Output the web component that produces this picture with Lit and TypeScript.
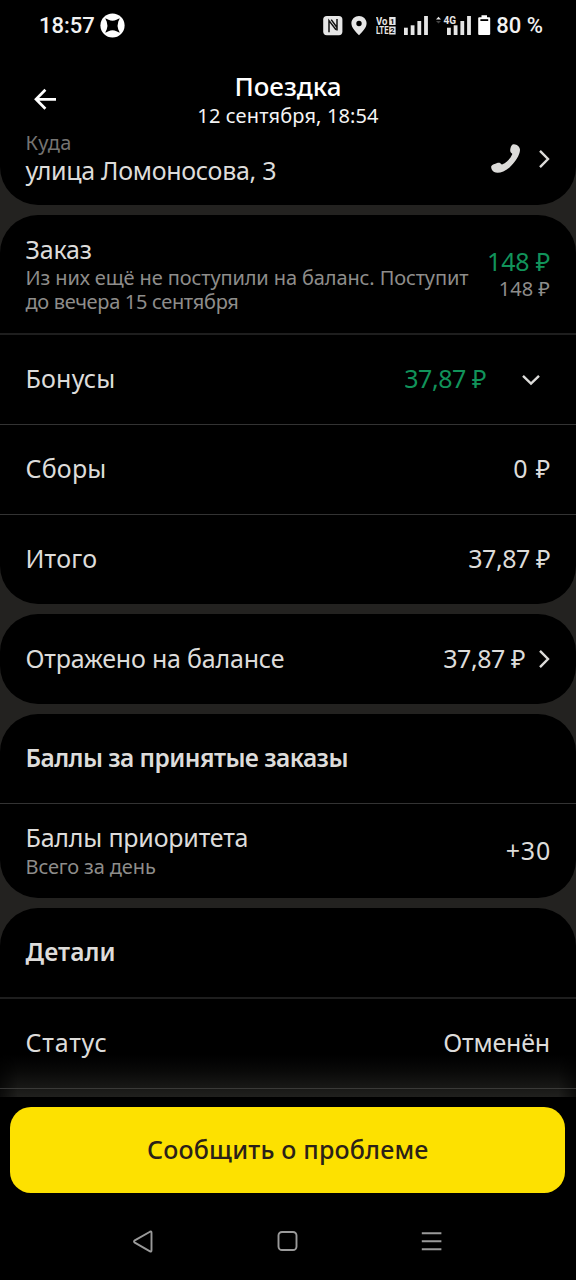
import { LitElement, html, css, svg, nothing } from 'lit';
import { customElement, property } from 'lit/decorators.js';
import { classMap } from 'lit/directives/class-map.js';

const bar = (x: number, top: number) => svg`<rect x=${x} y=${top} width="3.8" height=${20 - top} />`;
const bars = (x: number) => [bar(x, 12.7), bar(x + 6.7, 10.3), bar(x + 13.4, 6), bar(x + 20.1, 1)];

const chevronRight = html`<svg width="12" height="20" viewBox="0 0 12 20" fill="none" stroke="#dcdbd9" stroke-width="2.4"><path d="M2 1.8 10 10l-8 8.2" /></svg>`;
const chevronDown = html`<svg width="20" height="12" viewBox="0 0 20 12" fill="none" stroke="#dcdbd9" stroke-width="2.4"><path d="M2 1.8 10 9.6l8-7.8" /></svg>`;

@customElement('status-bar')
export class StatusBar extends LitElement {
  static styles = css`
    :host { display: flex; height: 35px; padding: 15px 33px 0 39px; align-items: flex-start; color: #f2f2f2;
      font: 500 22px/21px Roboto, sans-serif; }
    svg { display: block; flex: none; fill: #e6e6e6; }
    .badge { margin: -2px 0 0 5.5px; }
    .gap { flex: 1; }
    .pin { margin-left: 8px; }
    .volte { margin-left: 9px; }
    .signal { margin-left: 8px; }
    .net { margin-left: 7px; }
    .battery { margin-left: 7px; }
    .pct { margin-left: 5px; white-space: nowrap; }
    .num { font: 700 8px Roboto, sans-serif; fill: #000; }
    .lte { font: 700 10.5px Roboto, sans-serif; }
  `;
  render() {
    return html`
      <span>18:57</span>
      <svg class="badge" width="25" height="25" viewBox="-12.5 -12.5 25 25">
        <circle r="12.1" fill="#fff" />
        <path fill="#000" d="M-7.2-7.2Q-5.5-6.6-4-5.8Q0-3.8 4-5.8Q5.5-6.6 7.2-7.2Q6.6-5.5 5.8-4Q4.4 0 5.8 4Q6.6 5.5 7.2 7.2Q5.5 6.6 4 5.8Q0 3.8-4 5.8Q-5.5 6.6-7.2 7.2Q-6.6 5.5-5.8 4Q-4.4 0-5.8-4Q-6.6-5.5-7.2-7.2Z" />
      </svg>
      <span class="gap"></span>
      <svg width="20" height="21" viewBox="0 0 20 21">
        <rect x=".2" y="1" width="19.2" height="19.2" rx="3.6" />
        <path d="M6 17.2V5.6l7 9.2M8.2 4.6l5.6 7.6M14 4v11.4" fill="none" stroke="#111" stroke-width="1.5" />
      </svg>
      <svg class="pin" width="16" height="21" viewBox="0 0 16 21">
        <path fill-rule="evenodd" d="M8 .9C3.9.9.4 4 .4 8.3c0 4.6 4.6 9 7.6 12 3-3 7.6-7.4 7.6-12C15.6 4 12.1.9 8 .9Zm0 4.9a2.7 2.7 0 1 1 0 5.4 2.7 2.7 0 0 1 0-5.4Z" />
      </svg>
      <svg class="volte" width="20" height="21" viewBox="0 0 20 21">
        <text class="lte" x="0" y="9.6" textLength="11.4" lengthAdjust="spacingAndGlyphs">Vo</text>
        <text class="lte" x="0" y="19.3" textLength="12.6" lengthAdjust="spacingAndGlyphs">LTE</text>
        <rect x="13.2" y="2" width="6.4" height="8" />
        <rect x="13.2" y="11.5" width="6.4" height="8" />
        <text class="num" x="14" y="8.9">1</text>
        <text class="num" x="14" y="18.4">2</text>
      </svg>
      <svg class="signal" width="25" height="21" viewBox="0 0 25 21">${bars(0)}</svg>
      <svg class="net" width="35" height="21" viewBox="0 0 35 21">
        <path d="M0 4.5 2.5 1.8 5 4.5Z" /><path fill="#444" d="M0 6 2.5 8.5 5 6Z" />
        ${bars(11)}
        <rect x="7" y="0" width="14" height="9.6" fill="#000" />
        <text class="lte" x="7.6" y="9" textLength="12.6" lengthAdjust="spacingAndGlyphs">4G</text>
      </svg>
      <svg class="battery" width="13" height="21" viewBox="0 0 13 21">
        <path fill="#fff" d="M3.5.3H9v2h2.2q1 0 1 1V19q0 1-1 1h-10q-1 0-1-1V3.3q0-1 1-1h2.3Z" />
        <rect x="2.4" y="4.2" width="7.8" height="1.8" fill="#000" />
      </svg>
      <span class="pct">80 %</span>
    `;
  }
}

type Ls = 'n1' | 'n2' | 'n45' | 'n55' | 'p2' | 'p3' | 'p9' | '';

@customElement('ride-row')
export class RideRow extends LitElement {
  @property() label = '';
  @property() sub = '';
  @property() sub2 = '';
  @property() value = '';
  @property() subvalue = '';
  @property() tone = '';
  @property() chevron = '';
  @property() ls: Ls = '';
  @property() vls: Ls = '';
  @property({ type: Boolean }) heading = false;

  static styles = css`
    :host { display: flex; align-items: center; justify-content: space-between; box-sizing: border-box;
      padding: 0 26px 0 25.5px; height: 90px; color: #dddcda; font-size: 25px; line-height: 30px; white-space: nowrap; }
    .main { display: block; }
    .left { padding-bottom: 3px; }
    .low { padding-bottom: 1px; }
    .three { padding-bottom: 0; }
    .right { display: flex; align-items: center; padding-bottom: 4px; text-align: right; }
    .right.lower { padding-bottom: 2px; }
    .stack { padding-bottom: 0; }
    .sub { display: block; margin-top: 3px; font-size: 20px; line-height: 24px; color: #8e8d8b; letter-spacing: -.12px; }
    .three .sub { margin-top: 2px; }
    .three .second { margin-top: 0; letter-spacing: -.33px; }
    .right .sub { margin-top: 1px; letter-spacing: 0; }
    .green { color: #11935a; }
    .heading { font-size: 24.5px; font-weight: 600; }
    .n1 { letter-spacing: -.16px; } .n2 { letter-spacing: -.2px; }
    .n45 { letter-spacing: -.45px; } .n55 { letter-spacing: -.55px; }
    .p2 { letter-spacing: .1px; } .p3 { letter-spacing: .2px; } .p9 { letter-spacing: .8px; }
    .right .p9 { margin-right: -1px; }
    svg { display: block; margin-top: 2px; }
    .cright { margin-left: 13px; }
    .cdown { margin: 3px 9px 0 35px; }
  `;
  render() {
    const main = { main: true, heading: this.heading, [this.ls || 'ls0']: true };
    const val = { main: true, green: this.tone === 'green', [this.vls || 'ls0']: true };
    const lower = this.chevron === 'right' || (!!this.sub && !this.subvalue);
    return html`
      <div class=${classMap({ left: true, low: !!this.sub || this.heading, three: !!this.sub2 })}>
        <span class=${classMap(main)}>${this.label}</span>
        ${this.sub ? html`<span class="sub">${this.sub}</span>` : nothing}
        ${this.sub2 ? html`<span class="sub second">${this.sub2}</span>` : nothing}
      </div>
      <div class=${classMap({ right: true, lower, stack: !!this.subvalue })}>
        <div>
          <span class=${classMap(val)}>${this.value}</span>
          ${this.subvalue ? html`<span class="sub">${this.subvalue}</span>` : nothing}
        </div>
        ${this.chevron === 'right' ? html`<span class="cright">${chevronRight}</span>` : nothing}
        ${this.chevron === 'down' ? html`<span class="cdown">${chevronDown}</span>` : nothing}
      </div>
    `;
  }
}

@customElement('app-root')
export class AppRoot extends LitElement {
  static styles = css`
    :host { display: flex; flex-direction: column; height: 1280px; overflow: hidden; background: #000; color: #fff;
      font-family: 'Noto Sans', 'Open Sans', sans-serif; }
    header { display: grid; grid-template-columns: 90px 1fr 90px; height: 77px; flex: none; background: #000; }
    .back { margin: 38px 0 0 33px; display: block; }
    .titles { display: flex; flex-direction: column; align-items: center; padding-top: 21px; }
    .title { font-size: 26px; line-height: 30px; font-weight: 500; letter-spacing: 0; }
    .date { font-size: 20px; line-height: 24px; margin-top: 3px; letter-spacing: .13px; color: #f4f4f4; }
    main { flex: none; display: flex; flex-direction: column; height: 970px; overflow: hidden; background: #232220; position: relative; }
    section { flex: none; background: #000; border-radius: 38px; overflow: hidden; margin-bottom: 10px; }
    .dest { display: flex; box-sizing: border-box; height: 78px; border-radius: 0 0 38px 38px; padding: 4px 26px 0 25.5px; color: #dddcda; }
    .where { flex: 1; font-size: 25px; line-height: 30px; letter-spacing: -.3px; }
    .where small { display: block; font-size: 20px; line-height: 24px; color: #757472; letter-spacing: .4px; }
    .phone { margin: 12px 17px 0 0; }
    .go { margin-top: 18px; }
    .order { height: 120px; border-bottom: 2px solid #1e1e1e; padding-bottom: 1px; }
    .line { border-bottom: 1px solid #333; }
    .faint { border-bottom: 2px solid #1e1e1e; height: 91px; }
    .short { height: 89px; }
    .points { height: 94px; }
    .fade { position: absolute; left: 0; right: 0; bottom: 0; height: 42px;
      background: linear-gradient(to top, rgba(80,80,74,.4), rgba(72,72,66,.32) 25%, rgba(70,70,66,.13) 62%, transparent);
      -webkit-mask-image: linear-gradient(to right, rgba(0,0,0,.4), #000 18px, #000 558px, rgba(0,0,0,.4)); }
    footer { flex: none; display: flex; flex-direction: column; height: 183px; background: #000; }
    button { margin: 10px 10.7px 0 10.3px; height: 85.5px; border: 0; border-radius: 21px; background: #fde100; color: #2b2118;
      font: 500 25px/30px 'Noto Sans', sans-serif; letter-spacing: .2px; padding: 0 0 1px; }
    nav { display: flex; justify-content: space-between; padding: 37.5px 134px 0 132px; }
    nav svg { display: block; fill: none; stroke: #9a9a9a; stroke-width: 1.9; }
  `;
  render() {
    return html`
      <status-bar></status-bar>
      <header>
        <svg class="back" width="24" height="23" viewBox="0 0 24 23" fill="none" stroke="#fff" stroke-width="2.7"><path d="M23 11.3H3M12.4 1.8 3 11.3l9.4 9.5" /></svg>
        <div class="titles"><span class="title">Поездка</span><span class="date">12 сентября, 18:54</span></div>
      </header>
      <main>
        <section class="dest">
          <div class="where"><small>Куда</small>улица Ломоносова, 3</div>
          <svg class="phone" width="31" height="31" viewBox="0 0 31 31" fill="#dcdbd9">
            <path d="M24 1.2c-1.8-.3-3 1.5-3.6 4.3-.5 2.3-.1 3.9 1.3 4.8.5.3.6.6.4 1.2-1.7 4.1-5.2 7.7-9.6 9.8-.6.3-1 .2-1.4-.3-.9-1.3-2.2-1.7-4-1-2.3.9-4.7 1.7-5.7 3-.8 1.2.3 4.6 2.7 6 3.5 1.9 9.8.4 15.400-4.600C25.600 19 29.800 11.900 30 7c.1-3.500-2.900-5.300-6-5.800Z" />
          </svg>
          <span class="go">${chevronRight}</span>
        </section>
        <section>
          <ride-row class="order" label="Заказ" ls="n1" sub="Из них ещё не поступили на баланс. Поступит"
            sub2="до вечера 15 сентября" value="148 ₽" subvalue="148 ₽" tone="green" vls="n2"></ride-row>
          <ride-row class="line" label="Бонусы" ls="p3" value="37,87 ₽" vls="n45" tone="green" chevron="down"></ride-row>
          <ride-row class="line" label="Сборы" ls="p3" value="0 ₽" vls="p9"></ride-row>
          <ride-row class="short" label="Итого" ls="p3" value="37,87 ₽" vls="n45"></ride-row>
        </section>
        <section>
          <ride-row label="Отражено на балансе" ls="n2" value="37,87 ₽" vls="n45" chevron="right"></ride-row>
        </section>
        <section>
          <ride-row class="line" heading label="Баллы за принятые заказы" ls="n55"></ride-row>
          <ride-row class="points" label="Баллы приоритета" ls="n2" sub="Всего за день" value="+30" vls="p9"></ride-row>
        </section>
        <section>
          <ride-row class="faint" heading label="Детали" ls="p2"></ride-row>
          <ride-row class="line" label="Статус" ls="p9" value="Отменён" vls="n2"></ride-row>
          <ride-row></ride-row>
        </section>
        <div class="fade"></div>
      </main>
      <footer>
        <button>Сообщить о проблеме</button>
        <nav>
          <svg width="21" height="23" viewBox="0 0 21 23"><path d="M18 1.7 2.8 10.4q-1.6 1.1 0 2.2L18 21.3q1.5.7 1.5-1V2.7q0-1.7-1.5-1Z" /></svg>
          <svg width="21" height="23" viewBox="0 0 21 23"><rect x="1.5" y="2" width="18" height="18" rx="3.5" /></svg>
          <svg width="21" height="23" viewBox="0 0 21 23"><path d="M.8 3.3h19.6M.8 11.3h19.6M.8 19.3h19.6" /></svg>
        </nav>
      </footer>
    `;
  }
}
